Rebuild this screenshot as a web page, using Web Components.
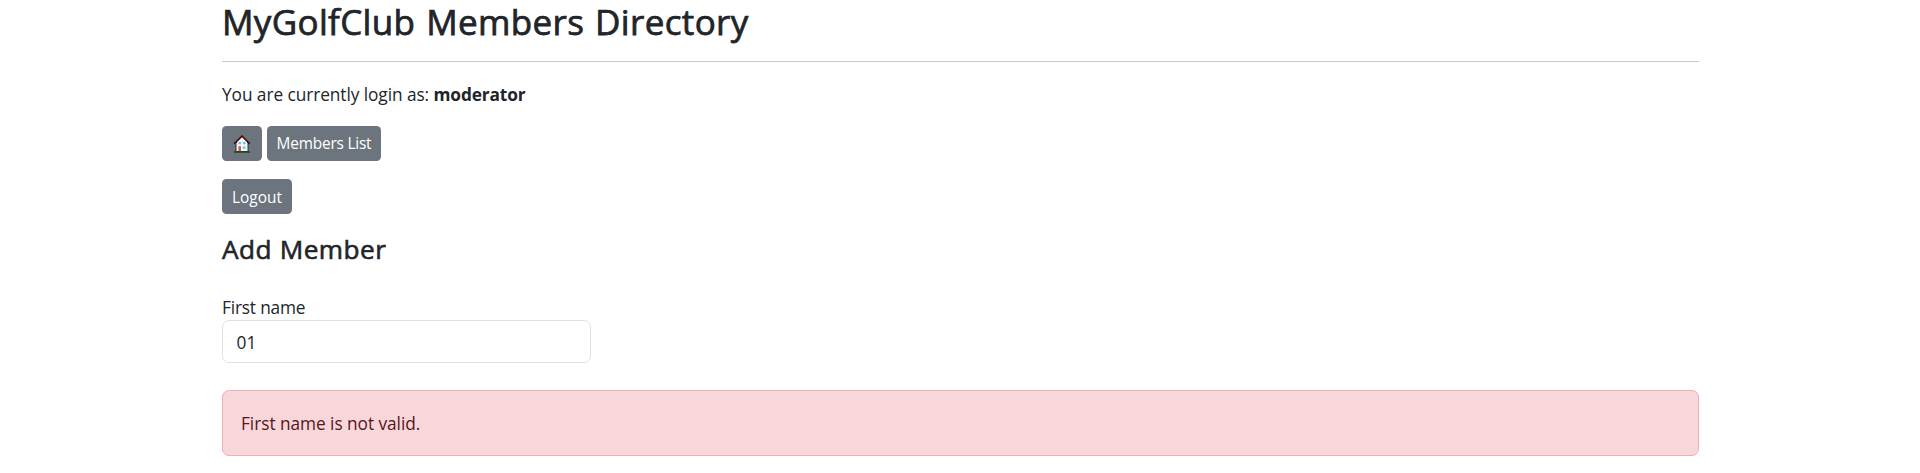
<!DOCTYPE html>
<html lang="en">
<head>
<meta charset="utf-8">
<title>MyGolfClub Members Directory</title>
<style>
html,body{margin:0;height:473px;overflow:hidden;background:#fff;color:#212529;font-family:"Open Sans","Noto Sans",sans-serif;font-size:17.3px}
</style>
</head>
<body>
<club-page></club-page>
<script>
const define = (name, html) => customElements.define(name, class extends HTMLElement {
  constructor(){ super(); const t = document.createElement('template'); t.innerHTML = html;
    this.attachShadow({mode:'open'}).append(t.content.cloneNode(true)); }
});
define('page-title', `<style>:host{display:block;height:62px;border-bottom:1px solid #c8c8ca;box-sizing:border-box}
h1{margin:0;font-size:35px;font-weight:400;-webkit-text-stroke:.75px currentColor;line-height:43px;white-space:nowrap;letter-spacing:.35px;word-spacing:1.4px}</style><h1><slot></slot></h1>`);
define('login-status', `<style>:host{display:block;margin-top:19px;height:28px;line-height:28px;white-space:nowrap;letter-spacing:-.07px;font-weight:400}
b{font-weight:700;letter-spacing:-.12px}</style><span>You are currently login as: </span><b><slot></slot></b>`);
define('nav-button', `<style>:host{display:block}
button{display:flex;align-items:center;justify-content:center;box-sizing:border-box;width:var(--w);height:35px;padding:var(--drop,0) 0 0;border:0;border-radius:4.5px;background:#6c757d;color:#fff;font:400 15.4px/24px "Open Sans",sans-serif;white-space:nowrap;letter-spacing:var(--ls,0)}</style><button><slot></slot></button>`);
define('home-icon', `<style>:host{display:block;width:18px;height:18px}svg{display:block}</style>
<svg width="18" height="18" viewBox="0 0 18 18"><path d="M3 8 9 2 15 8v8.5H3z" fill="#f3f7fa" stroke="#251b1b" stroke-width=".9"/>
<path d="M1.2 8.8 9 1.2 16.8 8.8" fill="none" stroke="#30120f" stroke-width="1.6"/><path d="M4 6.9 9 2.1 14 6.9" fill="none" stroke="#c4563f" stroke-width=".7"/>
<path d="M5.4 7h2.6v2.3H5.4zM9.9 7h2.6v2.3H9.9zM9.9 11.4h2.6v2.3H9.9z" fill="#67c2e5"/><path d="M5.4 11.2h2.6v5.3H5.4z" fill="#d45c3f"/><path d="M1 17h16" stroke="#174f20" stroke-width="1.6"/></svg>`);
define('section-title', `<style>:host{display:block;margin-top:17px}h2{margin:0;font-size:26.2px;font-weight:400;-webkit-text-stroke:.6px currentColor;line-height:36px;letter-spacing:.45px;word-spacing:.5px}</style><h2><slot></slot></h2>`);
define('text-field', `<style>:host{display:block;width:369px;margin-top:27px}label{display:block;line-height:28px;height:26px;letter-spacing:-.18px}
input{display:block;box-sizing:border-box;width:100%;height:43px;margin:0;padding:2px 13px 0 13.5px;border:1px solid #dee2e6;border-radius:7px;outline:0;background:#fff;color:#212529;font:400 17.3px "Open Sans",sans-serif}</style>
<label for="v"><slot></slot></label><input id="v" value="01">`);
define('alert-box', `<style>:host{display:flex;align-items:center;box-sizing:border-box;height:66px;margin-top:27px;padding:0 18px;border:1px solid #f1aeb5;border-radius:7px;background:#f8d7da;color:#58151c;letter-spacing:-.05px}</style><span><slot></slot></span>`);
define('club-page', `<style>:host{display:block;width:1477px;margin-left:222px}.row{display:flex;gap:5px;margin-top:17px}.out{margin-top:18px}</style>
<page-title>MyGolfClub Members Directory</page-title>
<login-status>moderator</login-status>
<div class="row"><nav-button style="--w:40px"><home-icon></home-icon></nav-button><nav-button style="--w:114px;--ls:-.2px">Members List</nav-button></div>
<div class="row out"><nav-button style="--w:70px;--drop:2px">Logout</nav-button></div>
<section-title>Add Member</section-title>
<text-field>First name</text-field>
<alert-box>First name is not valid.</alert-box>`);
</script>
</body>
</html>
